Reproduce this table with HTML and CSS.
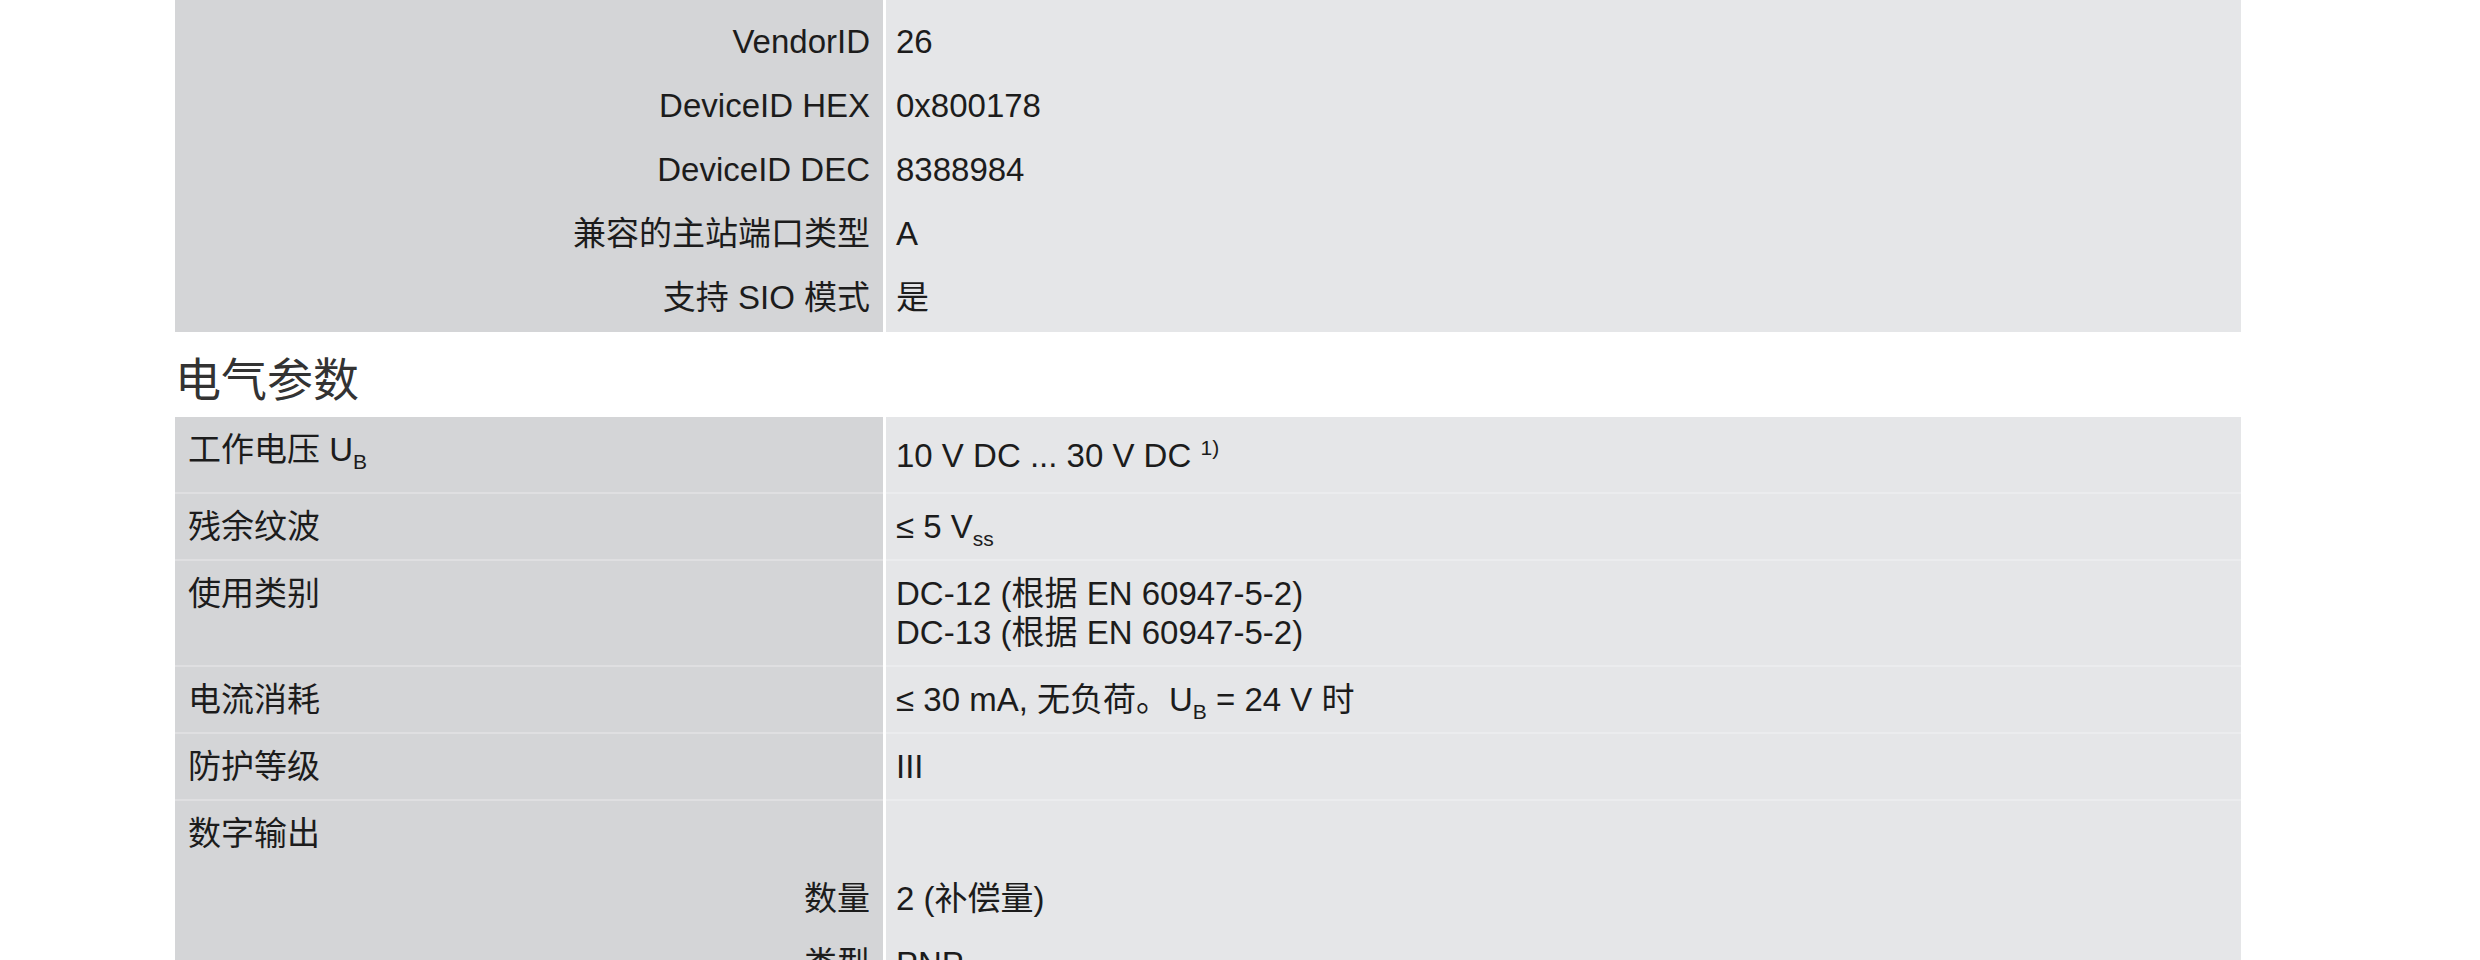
FILE: index.html
```html
<!DOCTYPE html>
<html lang="zh-CN">
<head>
    <meta charset="UTF-8">
    <meta name="viewport" content="width=device-width, initial-scale=1.0">
    <title>技术数据</title>
    <link rel="stylesheet" href="styles.css">
</head>
<body>
    <div class="page">
        <div class="spec top">
            <div class="row lead"><div class="key"></div><div class="val"></div></div>
            <div class="row"><div class="key right">VendorID</div><div class="val">26</div></div>
            <div class="row"><div class="key right">DeviceID HEX</div><div class="val">0x800178</div></div>
            <div class="row"><div class="key right">DeviceID DEC</div><div class="val">8388984</div></div>
            <div class="row"><div class="key right">兼容的主站端口类型</div><div class="val">A</div></div>
            <div class="row"><div class="key right">支持 SIO 模式</div><div class="val">是</div></div>
        </div>

        <h2 class="section-title">电气参数</h2>

        <div class="spec lined">
            <div class="row">
                <div class="key">工作电压 U<sub>B</sub></div>
                <div class="val raised">10 V DC ... 30 V DC <sup>1)</sup></div>
            </div>
            <div class="row">
                <div class="key">残余纹波</div>
                <div class="val">≤ 5 V<sub>ss</sub></div>
            </div>
            <div class="row">
                <div class="key">使用类别</div>
                <div class="val">DC-12 (根据 EN 60947-5-2)<br>DC-13 (根据 EN 60947-5-2)</div>
            </div>
            <div class="row">
                <div class="key">电流消耗</div>
                <div class="val">≤ 30 mA, 无负荷。U<sub>B</sub> = 24 V 时</div>
            </div>
            <div class="row">
                <div class="key">防护等级</div>
                <div class="val">III</div>
            </div>
            <div class="row">
                <div class="key">数字输出</div>
                <div class="val"></div>
            </div>
            <div class="row sub-row">
                <div class="key right">数量</div>
                <div class="val">2 (补偿量)</div>
            </div>
            <div class="row sub-row">
                <div class="key right">类型</div>
                <div class="val">PNP</div>
            </div>
        </div>
    </div>
</body>
</html>
```
FILE: styles.css
```css
* { box-sizing: border-box; }
body {
    margin: 0;
    background: #fff;
    color: #1c1c1c;
    font-family: "Liberation Sans", "Noto Sans CJK SC", sans-serif;
}
.page { width: 2241px; padding-left: 175px; }

.spec .row { display: grid; grid-template-columns: 708px 1355px; column-gap: 3px; }
.key, .val { font-size: 33px; line-height: 39px; padding: 13px 13px; }
.key { background: #d4d5d7; }
.val { background: #e5e6e8; padding-left: 10px; }
.key.right { text-align: right; }

.top .key, .top .val { padding-top: 10px; padding-bottom: 15px; }
.top .lead .key, .top .lead .val { padding: 0; height: 12px; }

.lined .row + .row .key,
.lined .row + .row .val { border-top: 2px solid rgba(255, 255, 255, 0.25); }
.lined .row.sub-row .key,
.lined .row.sub-row .val { border-top: 0; }
.val.raised { padding-top: 19px; padding-bottom: 17px; }

sub, sup { font-size: 21px; line-height: 0; }

.section-title {
    margin: 11px 0 8px;
    font-family: "Noto Sans CJK SC", sans-serif;
    font-size: 46px;
    line-height: 66px;
    font-weight: normal;
    color: #333;
}
```
